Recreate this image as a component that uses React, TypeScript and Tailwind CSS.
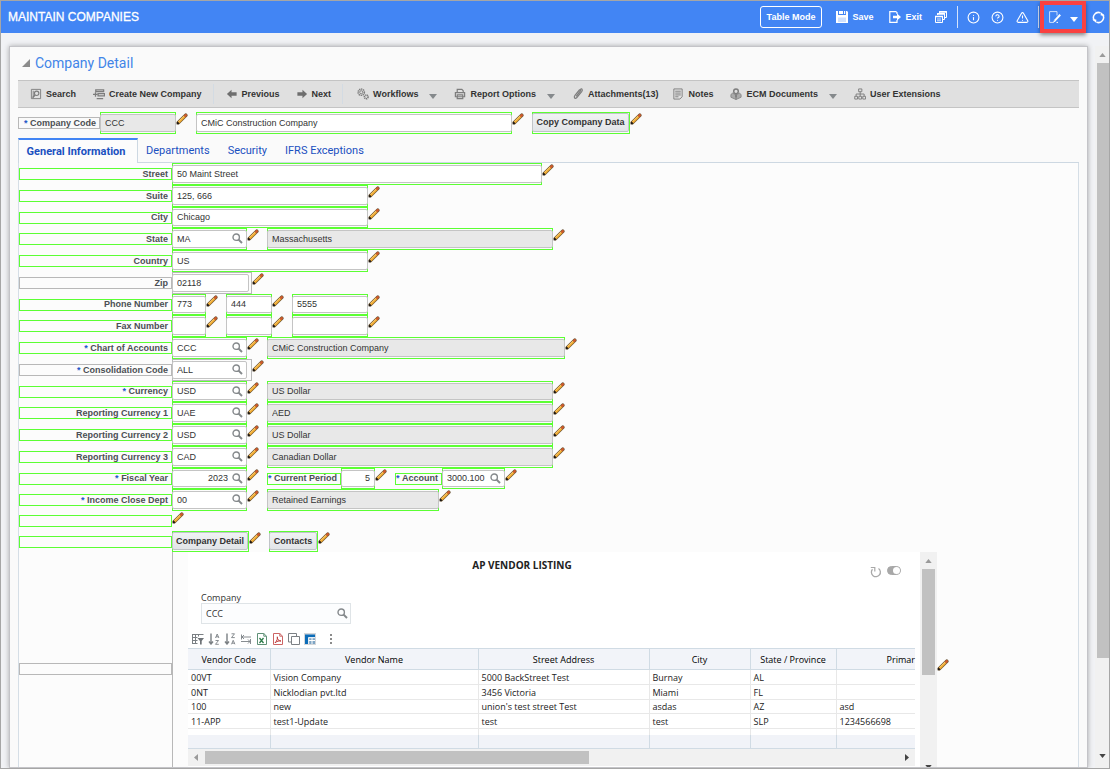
import type { ReactNode } from 'react'
import { Info, CircleHelp, TriangleAlert } from 'lucide-react'

type Tone = 'green' | 'gray'

interface FieldSpec {
  id: string
  value: string
  width: string
  ariaLabel?: string
  lookup?: boolean
  disabled?: boolean
  align?: 'right'
  tone?: Tone
  wrapperWidth?: string
  label?: { text: string; width: string }
}

interface RowSpec {
  label: string
  required?: boolean
  tone?: Tone
  fields: FieldSpec[]
}

const rows: RowSpec[] = [
  { label: 'Street', fields: [{ id: 'street', value: '50 Maint Street', width: 'w-[370px]' }] },
  { label: 'Suite', fields: [{ id: 'suite', value: '125, 666', width: 'w-[196px]' }] },
  { label: 'City', fields: [{ id: 'city', value: 'Chicago', width: 'w-[196px]' }] },
  {
    label: 'State',
    fields: [
      { id: 'state', value: 'MA', width: 'w-[75px]', lookup: true },
      { id: 'state-name', ariaLabel: 'State name', value: 'Massachusetts', width: 'w-[286px]', disabled: true },
    ],
  },
  { label: 'Country', fields: [{ id: 'country', value: 'US', width: 'w-[196px]' }] },
  {
    label: 'Zip',
    tone: 'gray',
    fields: [{ id: 'zip', value: '02118', width: 'w-[77px]', wrapperWidth: 'w-[80px]', tone: 'gray' }],
  },
  {
    label: 'Phone Number',
    fields: [
      { id: 'phone', value: '773', width: 'w-[34px]' },
      { id: 'phone-2', ariaLabel: 'Phone prefix', value: '444', width: 'w-[46px]' },
      { id: 'phone-3', ariaLabel: 'Phone line', value: '5555', width: 'w-[76px]' },
    ],
  },
  {
    label: 'Fax Number',
    fields: [
      { id: 'fax', value: '', width: 'w-[34px]' },
      { id: 'fax-2', ariaLabel: 'Fax prefix', value: '', width: 'w-[46px]' },
      { id: 'fax-3', ariaLabel: 'Fax line', value: '', width: 'w-[76px]' },
    ],
  },
  {
    label: 'Chart of Accounts',
    required: true,
    fields: [
      { id: 'chart', value: 'CCC', width: 'w-[75px]', lookup: true },
      { id: 'chart-name', ariaLabel: 'Chart name', value: 'CMiC Construction Company', width: 'w-[298px]', disabled: true },
    ],
  },
  {
    label: 'Consolidation Code',
    required: true,
    tone: 'gray',
    fields: [{ id: 'consolidation', value: 'ALL', width: 'w-[75px]', wrapperWidth: 'w-[80px]', lookup: true, tone: 'gray' }],
  },
  {
    label: 'Currency',
    required: true,
    fields: [
      { id: 'currency', value: 'USD', width: 'w-[75px]', lookup: true },
      { id: 'currency-name', ariaLabel: 'Currency name', value: 'US Dollar', width: 'w-[286px]', disabled: true },
    ],
  },
  {
    label: 'Reporting Currency 1',
    fields: [
      { id: 'rc1', value: 'UAE', width: 'w-[75px]', lookup: true },
      { id: 'rc1-name', ariaLabel: 'Reporting currency 1 name', value: 'AED', width: 'w-[286px]', disabled: true },
    ],
  },
  {
    label: 'Reporting Currency 2',
    fields: [
      { id: 'rc2', value: 'USD', width: 'w-[75px]', lookup: true },
      { id: 'rc2-name', ariaLabel: 'Reporting currency 2 name', value: 'US Dollar', width: 'w-[286px]', disabled: true },
    ],
  },
  {
    label: 'Reporting Currency 3',
    fields: [
      { id: 'rc3', value: 'CAD', width: 'w-[75px]', lookup: true },
      { id: 'rc3-name', ariaLabel: 'Reporting currency 3 name', value: 'Canadian Dollar', width: 'w-[286px]', disabled: true },
    ],
  },
  {
    label: 'Fiscal Year',
    required: true,
    fields: [
      { id: 'fiscal', value: '2023', width: 'w-[75px]', lookup: true, align: 'right' },
      { id: 'period', value: '5', width: 'w-[34px]', align: 'right', label: { text: 'Current Period', width: 'w-[74px]' } },
      { id: 'account', value: '3000.100', width: 'w-[63px]', lookup: true, label: { text: 'Account', width: 'w-[47px]' } },
    ],
  },
  {
    label: 'Income Close Dept',
    required: true,
    fields: [
      { id: 'dept', value: '00', width: 'w-[75px]', lookup: true },
      { id: 'dept-name', ariaLabel: 'Department name', value: 'Retained Earnings', width: 'w-[172px]', disabled: true },
    ],
  },
]

const vendors = [
  ['00VT', 'Vision Company', '5000 BackStreet Test', 'Burnay', 'AL', ''],
  ['0NT', 'Nicklodian pvt.ltd', '3456 Victoria', 'Miami', 'FL', ''],
  ['100', 'new', "union's test street Test", 'asdas', 'AZ', 'asd'],
  ['11-APP', 'test1-Update', 'test', 'test', 'SLP', '1234566698'],
]

function Pencil() {
  return (
    <svg className="h-3 w-3" viewBox="0 0 12 12" aria-hidden="true">
      <path d="M2.200 9.800 9.800 2.200" stroke="#6b5436" strokeWidth="3.600" strokeLinecap="round" />
      <path d="M2.600 9.400 9 3" stroke="#f0a92e" strokeWidth="2.400" />
      <path d="M2.600 8.600 8.200 3" stroke="#ffdc92" strokeWidth="0.700" />
      <path d="m9.200 2.800.6-.6" stroke="#cf5a2c" strokeWidth="2.400" strokeLinecap="round" />
      <path d="m.6 11.400.8-2.800 2 2z" fill="#1c1712" />
    </svg>
  )
}

function EditButton() {
  return (
    <button type="button" aria-label="Edit field" className="mt-px mr-2 h-3 w-3 shrink-0 self-start">
      <Pencil />
    </button>
  )
}

function Magnifier({ className }: { className: string }) {
  return (
    <svg className={className} viewBox="0 0 11 11" fill="none" stroke="#85898c" aria-hidden="true">
      <circle cx="4.2" cy="4.2" r="3.2" strokeWidth="1.4" />
      <path d="M6.6 6.6 10 10" strokeWidth="2" />
    </svg>
  )
}

function Caret({ className }: { className: string }) {
  return (
    <svg className={className} viewBox="0 0 8 5" fill="currentColor" aria-hidden="true">
      <path d="M0 0h8L4 5z" />
    </svg>
  )
}

function LabelBox({
  htmlFor,
  text,
  required,
  tone = 'green',
  width,
}: {
  htmlFor?: string
  text: string
  required?: boolean
  tone?: Tone
  width: string
}) {
  return (
    <label
      htmlFor={htmlFor}
      className={`flex h-3 shrink-0 items-center justify-end border pr-[3px] font-bold whitespace-pre text-[#4b4f54] ${width} ${
        tone === 'green' ? 'border-[#5cff33]' : 'border-[#b8b8b8]'
      }`}
    >
      {required && <span className="text-[#2458c8]">* </span>}
      {text}
    </label>
  )
}

function Field({ spec }: { spec: FieldSpec }) {
  const tone = spec.tone === 'gray' ? 'border-[#b8b8b8]' : 'border-[#5cff33]'
  return (
    <>
      {spec.label && <LabelBox htmlFor={spec.id} text={spec.label.text} width={spec.label.width} required />}
      <div className={`flex h-full shrink-0 border py-px ${tone} ${spec.wrapperWidth ?? spec.width}`}>
        <div className={`relative -ml-px flex shrink-0 ${spec.width}`}>
          <input
            id={spec.id}
            aria-label={spec.ariaLabel}
            defaultValue={spec.value}
            disabled={spec.disabled}
            className={`w-full min-w-0 rounded-xs border border-[#c4c4c4] pl-1 text-[#333] ${
              spec.disabled ? 'bg-[#e8e8e8]' : 'bg-white'
            } ${spec.lookup ? 'pr-[18px]' : 'pr-1'} ${spec.align === 'right' ? 'text-right' : ''}`}
          />
          {spec.lookup && (
            <button type="button" aria-label="Look up" className="absolute top-[3px] right-1">
              <Magnifier className="h-[11px] w-[11px]" />
            </button>
          )}
        </div>
      </div>
      <EditButton />
    </>
  )
}

function ActionButton({ text, width }: { text: string; width: string }) {
  return (
    <>
      <div className={`flex h-full shrink-0 border border-[#5cff33] pb-px ${width}`}>
        <button
          type="button"
          className="-ml-px flex-1 rounded-xs border border-[#c0c4c8] bg-linear-to-b from-[#f0f2f4] to-[#e2e5e8] font-bold whitespace-nowrap text-[#333]"
        >
          {text}
        </button>
      </div>
      <EditButton />
    </>
  )
}

function ToolIcon({ children }: { children: ReactNode }) {
  return (
    <svg className="h-3 w-3 shrink-0" viewBox="0 0 13 13" fill="none" stroke="#7d7d7d" aria-hidden="true">
      {children}
    </svg>
  )
}

function ToolItem({ text, icon, menu }: { text: string; icon: ReactNode; menu?: boolean }) {
  return (
    <div className="flex items-center gap-[11px]">
      <button type="button" className="flex items-center gap-1 font-bold whitespace-nowrap">
        <ToolIcon>{icon}</ToolIcon>
        {text}
      </button>
      {menu && (
        <button type="button" aria-label={`${text} menu`} className="pt-1 text-[#85898c]">
          <Caret className="h-[5px] w-2" />
        </button>
      )}
    </div>
  )
}

function ActionBar() {
  return (
    <div className="flex h-7 items-center gap-[17px] border-y border-[#c4c4c4] bg-[#e0e0e0] pl-3 text-[#333]">
      <ToolItem
        text="Search"
        icon={
          <>
            <path d="M1.5 1.5h10v10h-10zM3.5 3v7" />
            <circle cx="7.2" cy="5.8" r="2.4" strokeWidth="1.2" />
            <path d="m5.4 7.6-2.6 3" strokeWidth="1.6" />
          </>
        }
      />
      <div className="flex items-center gap-[11px]">
        <ToolItem
          text="Create New Company"
          icon={
            <>
              <path d="M3 2h8.500v2H3zM5.500 6h7v2.500h-7z" strokeWidth="1.400" />
              <path d="M4 11.500h7M0 7h5M2.700 4.500v5" strokeWidth="1.400" />
            </>
          }
        />
        <span className="h-5 w-px bg-[#d3dbe3]" />
      </div>
      <div className="-ml-[5px] flex items-center gap-4">
        <ToolItem text="Previous" icon={<path d="m1 6.500 5-4.500v2.500h5.500v4H6V11z" fill="#6e6e6e" stroke="none" />} />
        <div className="flex items-center gap-[11px]">
          <ToolItem text="Next" icon={<path d="M12 6.500 7 2v2.500H1.500v4H7V11z" fill="#6e6e6e" stroke="none" />} />
          <span className="h-5 w-px bg-[#d3dbe3]" />
        </div>
      </div>
      <div className="-ml-[3px]">
        <ToolItem
          text="Workflows"
          menu
          icon={
            <>
              <circle cx="4.600" cy="4.600" r="3.400" strokeWidth="1.600" strokeDasharray="1.500 0.700" />
              <circle cx="4.600" cy="4.600" r="1.700" />
              <circle cx="10" cy="9.600" r="2" strokeWidth="1.800" strokeDasharray="1.300 0.500" />
            </>
          }
        />
      </div>
      <ToolItem
        text="Report Options"
        menu
        icon={<path d="M3.500 5V1.500h5l1.500 1.500v2M1.500 5h10v4.500h-10zM3.500 7.500h6v4h-6z" strokeWidth="1.300" />}
      />
      <ToolItem
        text="Attachments(13)"
        icon={<path d="m4.500 9 4.500-5.500c1-1.200 0-2.200-1-1.300L3.200 8c-1.600 2-.2 4.300 1.800 2.600l5.500-6.600c1.500-2 .2-3.600-1.200-2.800" strokeWidth="1.300" />}
      />
      <div className="-ml-[3px]">
        <ToolItem text="Notes" icon={<path d="M2 1h9v8.500L8.500 12H2zM3.500 3.500h6M3.500 5.500h6M3.500 7.500h6M3.500 9.500H7" />} />
      </div>
      <ToolItem
        text="ECM Documents"
        menu
        icon={
          <>
            <path d="m1 7 2-1.500L6.500 8v4.500L1 10zM12 7l-2-1.500L6.500 8v4.500L12 10z" fill="#aaa" stroke="#8a8a8a" />
            <circle cx="6.500" cy="3.600" r="2.500" strokeWidth="1.600" />
            <path d="M6.500 6v4" strokeWidth="1.800" />
          </>
        }
      />
      <ToolItem
        text="User Extensions"
        icon={<path d="M5 1h3.500v3H5zM.8 9h3v3h-3zM5.200 9h3v3h-3zM9.500 9h3v3h-3zM6.700 4v5M2.300 9V6.500h8.700V9" />}
      />
    </div>
  )
}

function TopBar() {
  return (
    <header className="flex h-8 shrink-0 items-center bg-[#4285f4] pr-1 pl-[7px] font-bold text-white">
      <h1 className="flex-1 text-xs font-normal [-webkit-text-stroke:0.3px_white]">MAINTAIN COMPANIES</h1>
      <button type="button" className="h-[22px] rounded-[3px] border border-white px-[6px]">
        Table Mode
      </button>
      <button type="button" className="ml-[14px] flex items-center gap-1">
        <svg className="h-3 w-3" viewBox="0 0 12 12" fill="#fff" aria-hidden="true">
          <path d="M0 0h2v4h8V0h1l1 1v11H0zM3 0h4v3H3zM8 0h1.200v3H8z" />
          <path d="M2 6.500h8V11H2z" fill="#cfe0fd" />
        </svg>
        Save
      </button>
      <button type="button" className="ml-4 flex items-center gap-1">
        <svg className="h-3 w-3" viewBox="0 0 12 12" fill="none" stroke="#fff" aria-hidden="true">
          <path d="M8 3V1.500L6.800.6H.8v10.800H8V9" strokeWidth="1.200" />
          <path d="M4 4.800h4V2.500L12 6 8 9.500V7.200H4z" fill="#fff" stroke="none" />
        </svg>
        Exit
      </button>
      <button type="button" aria-label="Windows" className="ml-[13px]">
        <svg className="h-3 w-3" viewBox="0 0 12 12" fill="none" stroke="#fff" aria-hidden="true">
          <path d="M4.500 2V.500h7v6H10M2.500 4V2.500h7v6H8" />
          <path d="M4 1h8M2 3h8M0 5.500h8" strokeWidth="1.600" />
          <path d="M.5 5.500h7v6h-7z" />
          <path d="M2 8h4M2 9.800h4" strokeWidth="0.800" />
        </svg>
      </button>
      <span className="ml-[10px] h-[22px] w-px bg-[#d5e3fc]" />
      <button type="button" aria-label="Information" className="ml-[9px]">
        <Info className="h-[13px] w-[13px]" />
      </button>
      <button type="button" aria-label="Help" className="ml-[11px]">
        <CircleHelp className="h-[13px] w-[13px]" />
      </button>
      <button type="button" aria-label="Warnings" className="ml-3">
        <TriangleAlert className="h-[13px] w-[13px]" />
      </button>
      <span className="ml-[9px] h-[22px] w-px bg-[#d5e3fc]" />
      <div className="z-10 ml-px flex h-8 w-[46px] items-center justify-between border-4 border-[#fa4141] pr-1 pl-[5px] shadow-[0_2px_4px_rgba(0,0,0,0.45)]">
        <button type="button" aria-label="Edit layout">
          <svg className="h-3 w-3" viewBox="0 0 12 12" fill="none" stroke="#fff" aria-hidden="true">
            <path d="M8 4.500V.600H.600v10.800h4.200" stroke="#cfe0fd" />
            <path d="m5.800 9.600 5.400-5.800" strokeWidth="2" />
            <path d="m4.200 11.600.8-2.600 1.700 1.600z" fill="#fff" stroke="none" />
            <path d="M7.500 11.400h1.500" />
          </svg>
        </button>
        <button type="button" aria-label="Layout menu" className="pt-1">
          <Caret className="h-[5px] w-2" />
        </button>
      </div>
      <button type="button" aria-label="Refresh" className="ml-[6px]">
        <svg className="h-[13px] w-[13px]" viewBox="0 0 13 13" fill="none" stroke="#fff" aria-hidden="true">
          <path d="M2.500 9.500A5 5 0 0 1 8.500 1.900M10.500 3.500A5 5 0 0 1 4.500 11.100" strokeWidth="1.500" />
          <path d="M.3 8.500h4V12zM12.700 4.500h-4V1z" fill="#fff" stroke="none" />
        </svg>
      </button>
    </header>
  )
}

function ReportIcon({ children, label, stroke = '#7b8084' }: { children: ReactNode; label: string; stroke?: string }) {
  return (
    <button type="button" aria-label={label}>
      <svg className="h-3 w-3" viewBox="0 0 12 12" fill="none" stroke={stroke} aria-hidden="true">
        {children}
      </svg>
    </button>
  )
}

function VendorTable() {
  return (
    <table className="w-full table-fixed border-collapse text-[#222]">
      <colgroup>
        <col className="w-[82px]" />
        <col className="w-[208px]" />
        <col className="w-[171px]" />
        <col className="w-[101px]" />
        <col className="w-[86px]" />
        <col />
      </colgroup>
      <thead>
        <tr className="h-[21px] border-y border-[#d0dbe4] bg-[#f2f4f9]">
          {['Vendor Code', 'Vendor Name', 'Street Address', 'City', 'State / Province'].map((name) => (
            <th key={name} className="border-r border-[#d0dbe4] p-0 font-normal text-black">
              {name}
            </th>
          ))}
          <th className="p-0 text-right font-normal whitespace-nowrap text-black">
            Primar
          </th>
        </tr>
      </thead>
      <tbody>
        {vendors.map((vendor) => (
          <tr key={vendor[0]} className="h-[15px] border-b border-[#e8e8e8] leading-3 nth-3:h-[14px]">
            {vendor.map((cell, i) => (
              <td key={i} className="border-r border-[#e8e8e8] p-0 pt-px pl-[3px] whitespace-nowrap last:border-r-0">
                {cell}
              </td>
            ))}
          </tr>
        ))}
        <tr className="h-[6px]">
          {[0, 1, 2, 3, 4, 5].map((i) => (
            <td key={i} className="border-r border-[#e8e8e8] p-0 last:border-r-0" />
          ))}
        </tr>
      </tbody>
      <tfoot>
        <tr className="h-[14px] border-b border-[#d0dbe4] bg-[#f1f3f8]">
          {[0, 1, 2, 3, 4, 5].map((i) => (
            <td key={i} className="border-r border-[#d0dbe4] p-0 last:border-r-0" />
          ))}
        </tr>
      </tfoot>
    </table>
  )
}

function VendorReport() {
  return (
    <section
      aria-label="AP Vendor Listing"
      className="flex h-[217px] w-[749px] shrink-0 overflow-hidden bg-white font-['Open_Sans','Noto_Sans',sans-serif]"
    >
      <div className="min-w-0 flex-1 pr-[5px]">
        <div className="flex h-7 items-start pr-[14px]">
          <h2 className="flex-1 pt-[5px] text-center text-[10px] leading-4 font-bold text-[#222]">AP VENDOR LISTING</h2>
          <div className="ml-[14px] flex gap-[5px] pt-[14px] text-[#a8a8a8]">
            <button type="button" aria-label="Reload report">
              <svg className="h-3 w-3" viewBox="0 0 12 12" fill="none" stroke="currentColor" aria-hidden="true">
                <path d="M8.500 2.500A4.500 4.500 0 1 1 2.500 3.200" strokeWidth="1.300" />
                <path d="M.8 1.500h4v4" strokeWidth="1.200" />
              </svg>
            </button>
            <button
              type="button"
              aria-label="Toggle view"
              className="flex h-[9px] w-[14px] justify-end rounded-full border border-[#a8a8a8] bg-[#a8a8a8]"
            >
              <span className="h-[7px] w-[7px] rounded-full bg-white" />
            </button>
          </div>
        </div>
        <div className="mt-3 ml-[13px] w-[150px]">
          <label htmlFor="report-company" className="block leading-[11px] text-[#333]">
            Company
          </label>
          <div className="relative">
            <input
              id="report-company"
              defaultValue="CCC"
              className="block h-[21px] w-full border border-[#dfe4e7] bg-[#fcfdfe] pl-1 text-[#333]"
            />
            <button type="button" aria-label="Find company" className="absolute top-[5px] right-[3px]">
              <Magnifier className="h-[11px] w-[11px]" />
            </button>
          </div>
        </div>
        <div className="flex h-6 items-center gap-1 pt-[9px] pb-[3px] pl-1">
          <ReportIcon label="Filter">
            <path d="M.500 1.500h11M.500 4.500h5M.500 7.500h5M.500 10.500h5M.500 1v10M3.500 1v10M6.500 1.500v2" />
            <path d="M5.500 5h6.500L9.700 8v3.500H8V8z" fill="#6f7478" stroke="none" />
          </ReportIcon>
          <ReportIcon label="Sort ascending">
            <path d="M3 .5v10M1 8.500l2 2.500 2-2.500" strokeWidth="1.400" />
            <path d="m7.500 5 1.700-4 1.700 4M8 3.800h2.500M7.500 7.500h3l-3 3.800h3.300" strokeWidth="0.900" />
          </ReportIcon>
          <ReportIcon label="Sort descending">
            <path d="M3 .5v10M1 8.500l2 2.500 2-2.500" strokeWidth="1.400" />
            <path d="M7.500.800h3l-3 3.800h3.300M7.500 11.300l1.700-4 1.700 4M8 10.200h2.500" strokeWidth="0.900" />
          </ReportIcon>
          <ReportIcon label="Fit columns">
            <path d="M1.500 1.500v5M10.500 6v5M2 4h9M4 2 2 4l2 2M1 8.500h9M8 6.500l2 2-2 2" strokeWidth="0.900" />
          </ReportIcon>
          <ReportIcon label="Export to Excel" stroke="#5f9177">
            <path d="M1.500.500h6.300l2.700 2.700v8.300h-9zM7.800.500v2.700h2.700" />
            <path d="m3.500 5 4 5M7.500 5l-4 5" stroke="#2f7d4b" strokeWidth="1.300" />
          </ReportIcon>
          <ReportIcon label="Export to PDF" stroke="#cc6464">
            <path d="M1.500.500h6.300l2.700 2.700v8.300h-9zM7.800.500v2.700h2.700" />
            <path d="M3 9.800C5 8 6 5 5.300 3.800c-.5 2 1.200 4.200 3.700 4.200-2-.5-4 .3-6 1.800" stroke="#c03c3c" />
          </ReportIcon>
          <ReportIcon label="Copy">
            <path d="M3 9H.500V.500h8V3M3.500 3.500h8v8h-8z" />
          </ReportIcon>
          <ReportIcon label="Freeze columns" stroke="#fff">
            <path d="M0 0h12v12H0z" fill="#d4d7da" stroke="none" />
            <path d="M1 1.500h10v3H4.500V11H1z" fill="#0b6cb8" stroke="none" />
            <path d="M5 5h6v6H5z" fill="#7fa5c4" stroke="none" />
            <path d="M5 7.500h6M8 5v6M4.700 4.500v6.500M4.500 4.700H11" />
          </ReportIcon>
          <button type="button" aria-label="More" className="ml-[7px]">
            <svg className="h-3 w-2" viewBox="0 0 8 12" fill="#8b8b8b" aria-hidden="true">
              <path d="M3 1h2v2H3zM3 5h2v2H3zM3 9h2v2H3z" />
            </svg>
          </button>
        </div>
        <VendorTable />
        <div className="flex h-[17px] items-center bg-[#f1f1f1] px-[6px]">
          <svg className="h-[7px] w-1" viewBox="0 0 4 7" fill="#9a9a9a" aria-hidden="true">
            <path d="M4 0v7L0 3.500z" />
          </svg>
          <div className="ml-[7px] h-[13px] w-[384px] bg-[#c1c1c1]" />
          <svg className="ml-auto h-[7px] w-1" viewBox="0 0 4 7" fill="#444" aria-hidden="true">
            <path d="M0 0v7l4-3.500z" />
          </svg>
        </div>
      </div>
      <div className="flex w-[17px] flex-col items-center bg-[#f1f1f1] pt-[7px]">
        <Caret className="h-1 w-[7px] rotate-180 text-[#9a9a9a]" />
        <div className="mt-[6px] h-[106px] w-[13px] bg-[#c1c1c1]" />
        <Caret className="mt-auto h-1 w-[7px] text-[#444]" />
      </div>
    </section>
  )
}

export default function App() {
  return (
    <div className="flex h-screen flex-col overflow-hidden border border-[#a6a6a6] bg-[#f1f2f5] font-['Liberation_Sans',Arial,sans-serif] text-[9px] leading-[11px]">
      <TopBar />
      <div className="flex min-h-0 flex-1 pt-[13px] pl-2">
        <main className="min-w-0 flex-1 overflow-hidden border border-[#c4c4c8] bg-[#fafafa] px-2 shadow-[0_0_5px_rgba(0,0,0,0.3)]">
          <div className="flex h-8 items-center gap-[5px] pl-1">
            <svg className="h-2 w-2" viewBox="0 0 8 8" fill="#8b8b8b" aria-hidden="true">
              <path d="M8 0v8H0z" />
            </svg>
            <h2 className="font-['Roboto','Liberation_Sans',sans-serif] text-sm text-[#4285e8]">Company Detail</h2>
          </div>
          <div className="pt-px">
            <ActionBar />
          </div>
          <div className="mt-1 flex h-[22px] items-center">
            <LabelBox htmlFor="company-code" text="Company Code" required tone="gray" width="w-[82px]" />
            <Field spec={{ id: 'company-code', value: 'CCC', width: 'w-[76px]', disabled: true }} />
            <Field spec={{ id: 'company-name', ariaLabel: 'Company name', value: 'CMiC Construction Company', width: 'w-[316px]' }} />
            <ActionButton text="Copy Company Data" width="w-[98px]" />
          </div>
          <nav role="tablist" className="mt-1 flex h-[25px] font-['Roboto','Liberation_Sans',sans-serif] text-[11px] text-[#1a50c0]">
            <button
              type="button"
              role="tab"
              aria-selected="true"
              className="w-[120px] border-x border-t-2 border-x-[#cdd8e2] border-t-[#4285f4] bg-[#fcfcfc] pr-1 font-bold whitespace-nowrap"
            >
              General Information
            </button>
            <div className="flex flex-1 gap-[18px] border-b border-[#cdd8e2] pl-2">
              {['Departments', 'Security', 'IFRS Exceptions'].map((tab) => (
                <button key={tab} type="button" role="tab" aria-selected="false">
                  {tab}
                </button>
              ))}
            </div>
          </nav>
          <div className="border-x border-[#d5dee6] bg-[#fcfcfc]">
            {rows.map((row) => (
              <div key={row.label} className="flex h-[22px] items-center nth-[4n+3]:h-[21px]">
                <LabelBox htmlFor={row.fields[0].id} text={row.label} required={row.required} tone={row.tone} width="w-[153px]" />
                {row.fields.map((spec) => (
                  <Field key={spec.id} spec={spec} />
                ))}
              </div>
            ))}
            <div className="flex h-5 items-center">
              <LabelBox text="" width="w-[153px]" />
              <EditButton />
            </div>
            <div className="flex h-[21px] items-center">
              <LabelBox text="" width="w-[153px]" />
              <ActionButton text="Company Detail" width="w-[77px]" />
              <ActionButton text="Contacts" width="w-[49px]" />
            </div>
            <div className="flex">
              <div className="w-[153px] shrink-0 pt-[111px]">
                <LabelBox text="" tone="gray" width="w-full" />
              </div>
              <div className="flex border-l border-[#b8b8b8] pl-[15px]">
                <VendorReport />
                <div className="pt-[106px]">
                  <EditButton />
                </div>
              </div>
            </div>
          </div>
        </main>
        <div className="ml-[7px] flex w-[14px] shrink-0 flex-col items-center bg-[#f1f1f1] pt-[7px] pb-[10px]">
          <Caret className="h-1 w-[7px] rotate-180 text-[#9a9a9a]" />
          <div className="mt-[6px] h-[595px] w-3 self-end bg-[#c1c1c1]" />
          <Caret className="mt-auto h-1 w-[7px] text-[#444]" />
        </div>
      </div>
    </div>
  )
}
